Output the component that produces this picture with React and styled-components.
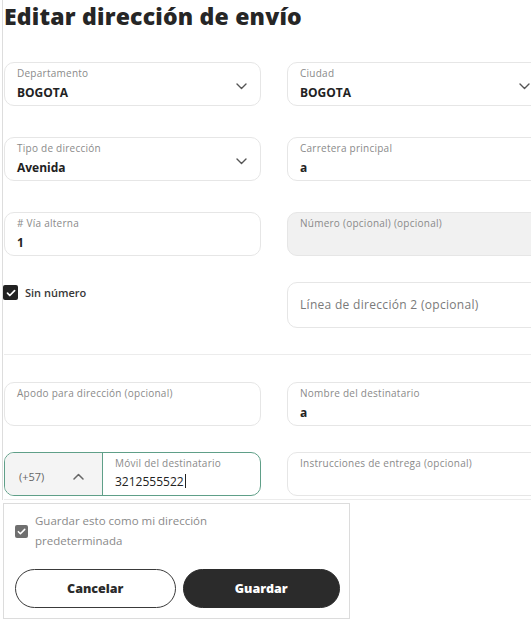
import React from "react";
import styled, { createGlobalStyle } from "styled-components";

const GlobalStyle = createGlobalStyle`
  body {
    margin: 0;
    background: #ffffff;
    overflow: hidden;
    font-family: "Open Sans", "Liberation Sans", sans-serif;
    color: #222222;
  }
`;

const Page = styled.div`
  width: 560px;
  margin-left: 2px;
  border-left: 1px solid #dddddd;
  padding-left: 1px;
  min-height: 500px;
`;

const Title = styled.h1`
  margin: 0;
  padding-top: 1px;
  font-size: 23px;
  line-height: 31px;
  font-weight: 800;
  color: #262626;
  letter-spacing: 0.2px;
`;

const Row = styled.div`
  display: grid;
  grid-template-columns: 257px 257px;
  column-gap: 26px;
  margin-top: ${(p) => p.$top}px;
  align-items: start;
`;

const Field = styled.div`
  box-sizing: border-box;
  height: ${(p) => p.$h || 44}px;
  border: 1px solid #e6e6e6;
  border-radius: 10px;
  background: ${(p) => (p.$disabled ? "#f1f1f1" : "#ffffff")};
  display: flex;
  align-items: ${(p) => (p.$center ? "center" : "flex-start")};
  padding: 3px 12px 0 12px;
`;

const FieldBody = styled.div`
  flex: 1;
  display: flex;
  flex-direction: column;
`;

const Label = styled.div`
  font-size: 10px;
  line-height: 14px;
  letter-spacing: 0.25px;
  color: #8a8a8a;
`;

const Value = styled.div`
  font-size: 12px;
  line-height: 20px;
  font-weight: 700;
  color: #222222;
  margin-top: 3px;
`;

const Placeholder = styled.div`
  font-size: 12px;
  letter-spacing: 0.3px;
  color: #7a7a7a;
  padding-bottom: 4px;
`;

const Chevron = styled.svg`
  width: 11px;
  height: 7px;
  margin-top: 17px;
  margin-right: 1px;
  flex-shrink: 0;
`;

const CheckRow = styled.label`
  display: flex;
  align-items: center;
  gap: 7px;
  margin-top: 3px;
  margin-left: -1px;
  font-size: 11px;
  font-weight: 600;
  color: #383838;
`;

const Box = styled.span`
  width: ${(p) => p.$size}px;
  height: ${(p) => p.$size}px;
  border-radius: 2px;
  background: ${(p) => p.$color};
  display: inline-flex;
  align-items: center;
  justify-content: center;
  flex-shrink: 0;
`;

const Divider = styled.div`
  height: 1px;
  background: #ececec;
  margin-top: ${(p) => p.$top}px;
  width: 540px;
`;

const PhoneGroup = styled.div`
  box-sizing: border-box;
  height: 44px;
  border: 1px solid #5f9f88;
  border-radius: 10px;
  display: flex;
  overflow: hidden;
`;

const Prefix = styled.div`
  width: 98px;
  background: #f4f4f4;
  border-right: 1px solid #5f9f88;
  display: flex;
  align-items: center;
  justify-content: space-between;
  padding: 4px 18px 0 14px;
  box-sizing: border-box;
  font-size: 11px;
  color: #666666;
`;

const PhoneInput = styled.div`
  flex: 1;
  padding: 3px 12px 0 12px;
`;

const Caret = styled.span`
  display: inline-block;
  width: 1px;
  height: 14px;
  background: #222222;
  vertical-align: -2px;
  margin-left: 1px;
`;

const PhoneValue = styled.div`
  font-size: 12px;
  line-height: 20px;
  color: #222222;
  margin-top: 2px;
`;

const Footer = styled.div`
  box-sizing: border-box;
  width: 347px;
  margin-top: 3px;
  margin-left: 3px;
  border: 1px solid #dcdcdc;
  padding: 7px 9px 10px 11px;
`;

const DefaultRow = styled.div`
  display: flex;
  align-items: center;
  gap: 7px;
`;

const DefaultText = styled.div`
  font-size: 11.5px;
  line-height: 20px;
  color: #8a8a8a;
  width: 200px;
`;

const Buttons = styled.div`
  display: flex;
  gap: 7px;
  margin-top: 18px;
`;

const Button = styled.button`
  height: 39px;
  width: ${(p) => p.$w}px;
  border-radius: 20px;
  border: 1px solid ${(p) => (p.$primary ? "#2b2b2b" : "#3a3a3a")};
  background: ${(p) => (p.$primary ? "#2b2b2b" : "#ffffff")};
  color: ${(p) => (p.$primary ? "#ffffff" : "#2b2b2b")};
  font-family: inherit;
  font-size: 12.5px;
  font-weight: 800;
  cursor: pointer;
`;

const Down = () => (
  <Chevron viewBox="0 0 11 7">
    <path d="M1 1l4.5 4.5L10 1" fill="none" stroke="#555" strokeWidth="1.4" strokeLinecap="round" strokeLinejoin="round" />
  </Chevron>
);

const Up = () => (
  <svg width="11" height="7" viewBox="0 0 11 7">
    <path d="M1 6l4.5-4.5L10 6" fill="none" stroke="#666" strokeWidth="1.5" strokeLinecap="round" strokeLinejoin="round" />
  </svg>
);

const Tick = ({ size = 10 }) => (
  <svg width={size} height={size} viewBox="0 0 10 10">
    <path d="M1.5 5.2l2.3 2.3L8.6 2.6" fill="none" stroke="#fff" strokeWidth="1.7" strokeLinecap="round" strokeLinejoin="round" />
  </svg>
);

const TextField = ({ label, value, select, disabled }) => (
  <Field $disabled={disabled}>
    <FieldBody>
      <Label>{label}</Label>
      {value && <Value>{value}</Value>}
    </FieldBody>
    {select && <Down />}
  </Field>
);

export default function App() {
  return (
    <>
      <GlobalStyle />
      <Page>
        <Title>Editar dirección de envío</Title>

        <Row $top={30}>
          <TextField label="Departamento" value="BOGOTA" select />
          <TextField label="Ciudad" value="BOGOTA" select />
        </Row>

        <Row $top={31}>
          <TextField label="Tipo de dirección" value="Avenida" select />
          <TextField label="Carretera principal" value="a" />
        </Row>

        <Row $top={31}>
          <TextField label="# Vía alterna" value="1" />
          <TextField label="Número (opcional) (opcional)" disabled />
        </Row>

        <Row $top={26}>
          <CheckRow>
            <Box $color="#222222" $size={15}>
              <Tick />
            </Box>
            Sin número
          </CheckRow>
          <Field $h={46} $center>
            <Placeholder>Línea de dirección 2 (opcional)</Placeholder>
          </Field>
        </Row>

        <Divider $top={26} />

        <Row $top={27}>
          <TextField label="Apodo para dirección (opcional)" />
          <TextField label="Nombre del destinatario" value="a" />
        </Row>

        <Row $top={26}>
          <PhoneGroup>
            <Prefix>
              <span>(+57)</span>
              <Up />
            </Prefix>
            <PhoneInput>
              <Label>Móvil del destinatario</Label>
              <PhoneValue>
                3212555522
                <Caret />
              </PhoneValue>
            </PhoneInput>
          </PhoneGroup>
          <TextField label="Instrucciones de entrega (opcional)" />
        </Row>

        <Divider $top={3} />
      </Page>

      <Footer>
        <DefaultRow>
          <Box $color="#6f6f6f" $size={13}>
            <Tick size={9} />
          </Box>
          <DefaultText>Guardar esto como mi dirección predeterminada</DefaultText>
        </DefaultRow>
        <Buttons>
          <Button $w={161}>Cancelar</Button>
          <Button $w={158} $primary>
            Guardar
          </Button>
        </Buttons>
      </Footer>
    </>
  );
}
